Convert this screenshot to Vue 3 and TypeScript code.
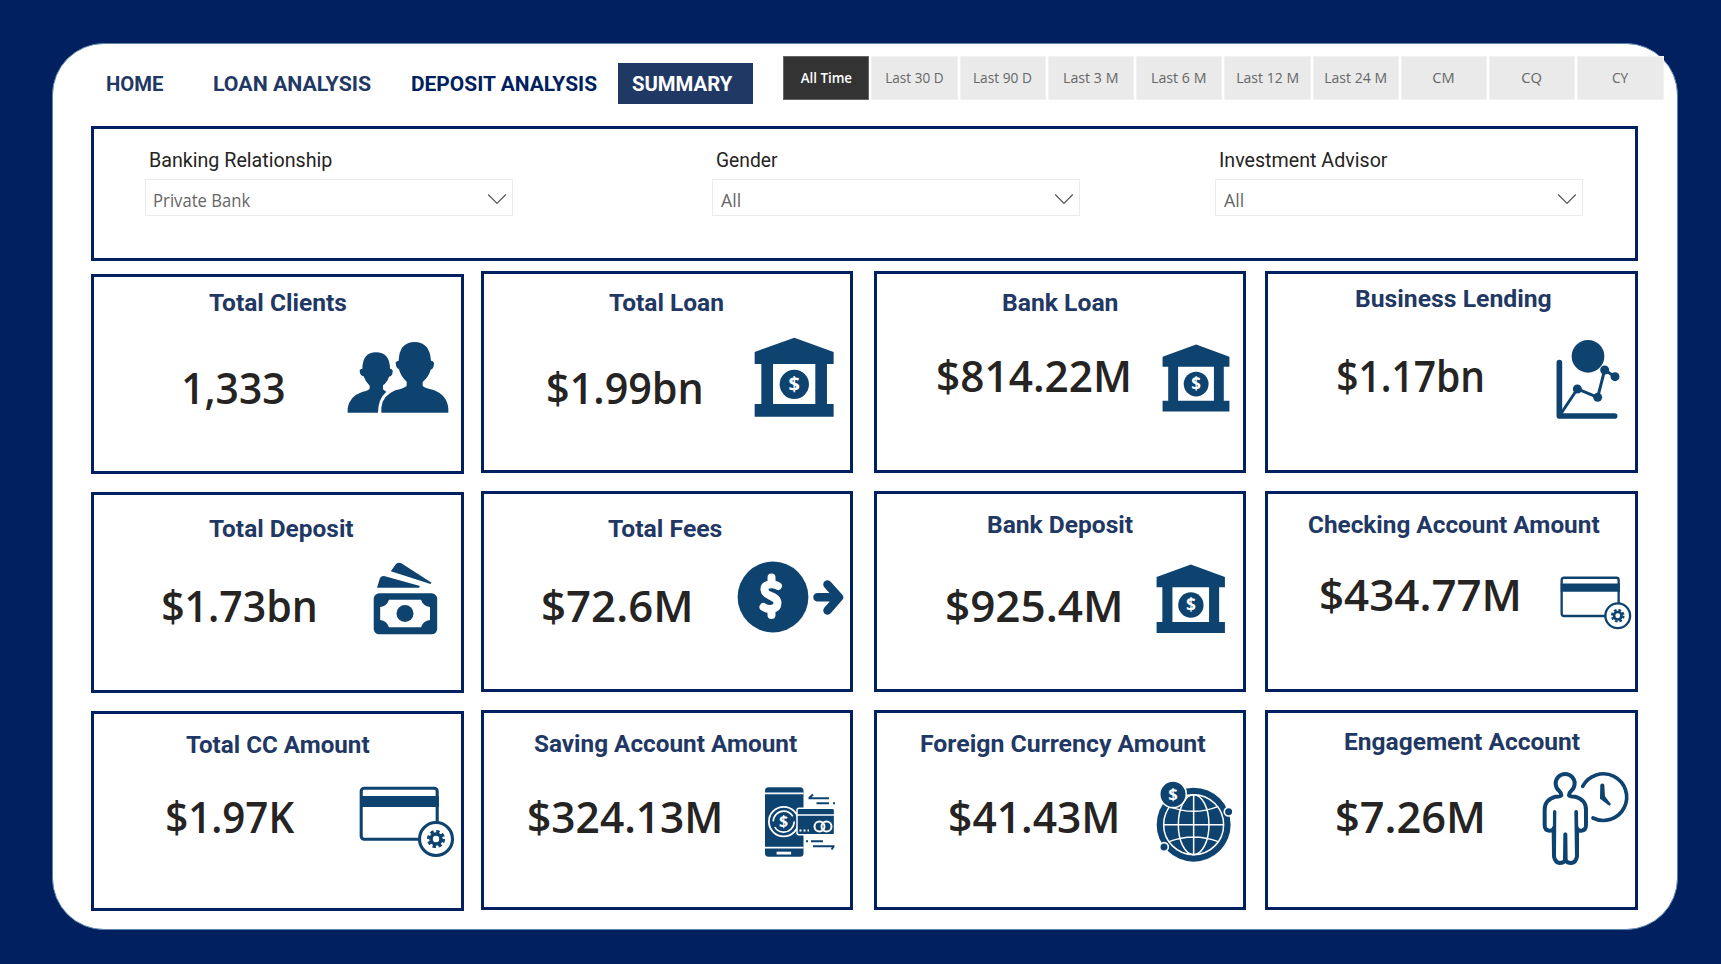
<script setup lang="ts">
import type { Directive } from 'vue'

interface Label {
  text: string
  x: number
  width: number
  base: number
}
interface Icon {
  kind: 'people' | 'bank' | 'chart' | 'cash' | 'fees' | 'card' | 'phone' | 'globe' | 'person'
  x: number
  y: number
  w: number
  h: number
}
interface Kpi {
  title: Label
  value: Label
  icon: Icon
}
interface Column {
  x: number
  rows: number[]
  name: string
  cards: Kpi[]
}

const BORDER = 3
const TITLE_BASELINE = 22
const VALUE_BASELINE = 42

const label = (text: string, x: number, right: number, base: number): Label => ({ text, x, width: right - x, base })
const icon = (kind: Icon['kind'], x: number, y: number, w: number, h: number): Icon => ({ kind, x, y, w, h })

const nav = [
  { text: 'HOME', name: 'home', width: 57 },
  { text: 'LOAN ANALYSIS', name: 'loan', width: 156.5 },
  { text: 'DEPOSIT ANALYSIS', name: 'deposit', width: 185 },
  { text: 'SUMMARY', name: 'summary', width: 100.5 },
]

const periods = [
  { text: 'All Time', width: 51.5 },
  { text: 'Last 30 D', width: 57.5 },
  { text: 'Last 90 D', width: 58 },
  { text: 'Last 3 M', width: 53 },
  { text: 'Last 6 M', width: 53 },
  { text: 'Last 12 M', width: 60.5 },
  { text: 'Last 24 M', width: 60.5 },
  { text: 'CM', width: 21 },
  { text: 'CQ', width: 20 },
  { text: 'CY', width: 16.5 },
]

const filters = [
  { label: 'Banking Relationship', labelWidth: 181.5, value: 'Private Bank', valueWidth: 96.5 },
  { label: 'Gender', labelWidth: 61, value: 'All', valueWidth: 19.5 },
  { label: 'Investment Advisor', labelWidth: 168, value: 'All', valueWidth: 19.5 },
]

const columns: Column[] = [
  {
    x: 91,
    rows: [274, 492, 711],
    name: 'first',
    cards: [
      {
        title: label('Total Clients', 208.5, 346, 311),
        value: label('1,333', 184, 283.5, 404),
        icon: icon('people', 346.7, 341, 102, 72.7),
      },
      {
        title: label('Total Deposit', 209, 353.5, 537),
        value: label('$1.73bn', 163, 315, 622),
        icon: icon('cash', 372.7, 562, 66, 74),
      },
      {
        title: label('Total CC Amount', 185.5, 369, 753),
        value: label('$1.97K', 167, 295, 833),
        icon: icon('card', 358.5, 786, 96, 72),
      },
    ],
  },
  {
    x: 481,
    rows: [271, 491, 710],
    name: 'second',
    cards: [
      {
        title: label('Total Loan', 609, 723.5, 311),
        value: label('$1.99bn', 548, 701, 404),
        icon: icon('bank', 754.3, 337.3, 80.3, 80.3),
      },
      {
        title: label('Total Fees', 607.5, 721.5, 537),
        value: label('$72.6M', 543, 690, 622),
        icon: icon('fees', 737, 561, 108, 72),
      },
      {
        title: label('Saving Account Amount', 533.5, 796.5, 752),
        value: label('$324.13M', 529, 720, 833),
        icon: icon('phone', 765, 787, 72, 72),
      },
    ],
  },
  {
    x: 874,
    rows: [271, 491, 710],
    name: 'third',
    cards: [
      {
        title: label('Bank Loan', 1002.5, 1117.5, 311),
        value: label('$814.22M', 938, 1128.5, 392),
        icon: icon('bank', 1161.5, 343.7, 68, 68),
      },
      {
        title: label('Bank Deposit', 988, 1133, 533),
        value: label('$925.4M', 947, 1120, 622),
        icon: icon('bank', 1156, 563.7, 69.5, 69.5),
      },
      {
        title: label('Foreign Currency Amount', 920.5, 1205, 752),
        value: label('$41.43M', 950, 1117, 833),
        icon: icon('globe', 1156.3, 781.3, 77.3, 81.3),
      },
    ],
  },
  {
    x: 1265,
    rows: [271, 491, 710],
    name: 'fourth',
    cards: [
      {
        title: label('Business Lending', 1355.5, 1550.5, 307),
        value: label('$1.17bn', 1337.5, 1482, 392),
        icon: icon('chart', 1555.7, 339.3, 64.7, 81.3),
      },
      {
        title: label('Checking Account Amount', 1308.5, 1599, 533),
        value: label('$434.77M', 1320.5, 1518, 611),
        icon: icon('card', 1559.5, 576.3, 72, 54),
      },
      {
        title: label('Engagement Account', 1345, 1580, 750),
        value: label('$7.26M', 1337, 1482.5, 833),
        icon: icon('person', 1541.7, 771.3, 87.3, 94.7),
      },
    ],
  },
]

const viewBoxes: Record<Icon['kind'], string> = {
  people: '800 228 306 218',
  bank: '838 217 241 241',
  chart: '902 223 194 244',
  cash: '0 0 66 74',
  fees: '0 0 108 72',
  card: '0 0 96 72',
  phone: '0 0 72 72',
  globe: '874 244 232 244',
  person: '845 214 262 284',
}

const place = (x: number, y: number, col: Column, row: number) => ({
  marginLeft: `${x - col.x - BORDER}px`,
  marginTop: `${y - col.rows[row] - BORDER}px`,
})

// Scales a line of text horizontally so that its drawn glyphs span the given width.
const vFit: Directive<HTMLElement, number> = {
  mounted(el, binding) {
    const ctx = document.createElement('canvas').getContext('2d')
    if (!ctx) return
    const style = getComputedStyle(el)
    ctx.font = `${style.fontWeight} ${style.fontSize} ${style.fontFamily}`
    const m = ctx.measureText((el.textContent ?? '').trim())
    const scale = binding.value / (m.actualBoundingBoxLeft + m.actualBoundingBoxRight)
    el.style.transform = binding.modifiers.center
      ? `scaleX(${scale})`
      : `translateX(${m.actualBoundingBoxLeft * scale}px) scaleX(${scale})`
  },
}
</script>

<template>
  <div class="page">
    <main class="panel">
      <header class="top">
        <nav class="nav">
          <a v-for="n in nav" :key="n.name" class="nav-item" :class="n.name"><span v-fit="n.width" class="fit">{{ n.text }}</span></a>
        </nav>
        <div class="periods">
          <button v-for="(p, i) in periods" :key="p.text" class="period" :class="{ active: i === 0 }">
            <span v-fit.center="p.width" class="fit centered">{{ p.text }}</span>
          </button>
        </div>
      </header>

      <section class="filters">
        <div v-for="f in filters" :key="f.label" class="filter">
          <div class="filter-label"><span v-fit="f.labelWidth" class="fit">{{ f.label }}</span></div>
          <div class="select">
            <span v-fit="f.valueWidth" class="fit">{{ f.value }}</span>
            <svg class="chevron" viewBox="0 0 20 12"><path d="M1.2 1.5 10 10.3 18.8 1.5" /></svg>
          </div>
        </div>
      </section>

      <section class="board">
        <div v-for="col in columns" :key="col.name" class="column" :class="col.name">
          <article v-for="(c, r) in col.cards" :key="c.title.text" class="card">
            <h2 class="title" :style="place(c.title.x, c.title.base - TITLE_BASELINE, col, r)">
              <span v-fit="c.title.width" class="fit">{{ c.title.text }}</span>
            </h2>
            <div class="value" :style="place(c.value.x, c.value.base - VALUE_BASELINE, col, r)">
              <span v-fit="c.value.width" class="fit">{{ c.value.text }}</span>
            </div>
            <svg
              class="icon"
              :style="place(c.icon.x, c.icon.y, col, r)"
              :width="c.icon.w"
              :height="c.icon.h"
              :viewBox="viewBoxes[c.icon.kind]"
            >
              <template v-if="c.icon.kind === 'people'">
                <path d="M802 443V430Q806 395 845 381Q865 376 868 371V362Q855 350 850 334Q838 332 838 316Q840 311 846 311Q847 262 887 262Q928 262 929 311Q938 312 937 320Q936 334 926 335Q922 350 908 361V373Q912 377 918 380Q893 402 893 443Z" />
                <path d="M903 443V428Q906 392 945 376Q975 368 979 362V350Q960 332 956 313Q946 309 946 292Q950 287 955 287Q957 231 1003 231Q1048 231 1052 287Q1061 288 1061 296Q1060 312 1051 314Q1046 334 1027 351V362Q1032 369 1060 375Q1100 390 1104 430V443Z" />
              </template>
              <template v-else-if="c.icon.kind === 'bank'">
                <path fill-rule="evenodd" d="M840 262 959 219 1077 262V298H1057V418H1077V456H840V418H860V298H840ZM895 298V418H1022V298Z" />
                <circle cx="959" cy="359" r="44" />
                <text class="glyph" x="959" y="380" font-size="60">$</text>
              </template>
              <template v-else-if="c.icon.kind === 'chart'">
                <circle cx="998" cy="275" r="49" />
                <path class="line" stroke-width="17" d="M912 294V454H1078" />
                <path class="line" stroke-width="9" d="M916 448 966 373 1027 398 1048 316 1079 336" />
                <circle cx="966" cy="373" r="13.5" />
                <circle cx="1027" cy="398" r="13.5" />
                <circle cx="1048" cy="316" r="13.5" />
                <circle cx="1079" cy="336" r="13.5" />
              </template>
              <template v-else-if="c.icon.kind === 'cash'">
                <path d="M4 25.7 7 16Q9 13 12 14.3L47 24 46 25.7Z" />
                <path d="M17.8 9.3 23 2Q26-.5 29.5 2L58.6 20.7 57.5 22Z" />
                <rect x=".7" y="31.3" width="63.5" height="41" rx="5.5" />
                <path class="white" d="M16 37.7H48Q50 44 57 45V58Q50 59 48 65.3H16Q14 59 7.2 58V45Q14 44 16 37.7Z" />
                <circle cx="32" cy="51.5" r="8.5" />
              </template>
              <template v-else-if="c.icon.kind === 'fees'">
                <circle cx="36" cy="36" r="35.4" />
                <path class="line knock" stroke-width="8" d="M41 25C35 22 27 23 27.5 29C28 36 40.5 34 40.5 42C40.5 49 31 49 26.5 46M34.5 16.500V23M34.5 48V54" />
                <path class="line" stroke-width="8.5" d="M80.5 36.3H100M90.5 23.5 102 36.3 90.5 49.5" />
              </template>
              <template v-else-if="c.icon.kind === 'card'">
                <rect class="outline" x="2.2" y="2.3" width="76" height="51" rx="3" />
                <rect x="1" y="10" width="79" height="11" />
                <circle class="outline" cx="77" cy="53" r="16.5" />
                <circle cx="77" cy="53" r="6.8" />
                <circle class="teeth" cx="77" cy="53" r="7.6" />
                <circle class="white" cx="77" cy="53" r="3.2" />
              </template>
              <template v-else-if="c.icon.kind === 'phone'">
                <rect x="0" y=".3" width="38.5" height="69.5" rx="3.5" />
                <path class="knock thin" d="M0 6.4H38.5M0 60.6H38.5" />
                <rect class="white" x="11.6" y="64.7" width="14.5" height="2.8" />
                <circle class="knock" stroke-width="1.8" cx="18.7" cy="34.6" r="14.8" />
                <circle class="knock" stroke-width="1.6" stroke-dasharray="27 6" cx="18.7" cy="34.6" r="10.5" />
                <text class="glyph" x="18.7" y="40.3" font-size="16">$</text>
                <rect class="edge" x="32" y="21.3" width="37.6" height="26.4" rx="2" />
                <path class="knock thin" d="M32 28H69.6" />
                <path class="knock dots" d="M34.5 43.500H44" />
                <circle class="knock" stroke-width="2" cx="54.5" cy="39.5" r="5" />
                <circle class="knock" stroke-width="2" cx="61.5" cy="39.5" r="5" />
                <path class="dash" d="M43.5 11.200H64M44.2 11 48 7.5M51.5 16.300H64M68 16.300H70M41 54.300H43M46 54.300H58M48 59.200H69.5M68.7 59.5 66.5 62.5" />
              </template>
              <template v-else-if="c.icon.kind === 'globe'">
                <circle cx="987" cy="375" r="111" />
                <g class="knock" stroke-width="4.5">
                  <circle cx="987" cy="375" r="90" />
                  <ellipse cx="987" cy="375" rx="46" ry="90" />
                  <path d="M987 285V465M897 375H1077M913 320Q987 350 1061 320M913 426Q987 398 1061 426" />
                </g>
                <circle class="badge" cx="925" cy="284" r="40" />
                <text class="glyph" x="925" y="301" font-size="50">$</text>
                <circle class="badge" cx="1092" cy="336" r="13" />
                <circle class="badge" cx="898" cy="442" r="13" />
              </template>
              <template v-else>
                <path class="line" stroke-width="12" d="M903 287Q903 279 896 273A28.5 28.5 0 1 1 933 273Q926 279 926 287Q928 291 944 291Q977 300 977 330V377Q977 392 963 393Q952 393 950 386M903 287Q901 291 886 291Q853 300 853 330V377Q853 392 867 393Q878 393 880 386M880 386 881 470Q884 488 898 490Q911 490 915 481Q919 490 933 490Q947 488 950 470L950 386" />
                <path d="M878 335Q883 327 888 335L887 470H877ZM942 335Q947 327 953 335L955 470H944ZM909 402Q915 393 921 402L922 484H908Z" />
                <path class="line" stroke-width="11" d="M967 260A70 70 0 1 1 998 355" />
                <path d="M1020 255Q1026 248 1032 255L1034 290 1051 312Q1052 320 1045 317L1019 297Z" />
              </template>
            </svg>
          </article>
        </div>
      </section>
    </main>
  </div>
</template>

<style>
body {
  margin: 0;
  background: #00205f;
}
</style>

<style scoped>
.page {
  box-sizing: border-box;
  width: 1721px;
  height: 964px;
  padding: 43px 0 0 52px;
  overflow: hidden;
  background: #00205f;
}
.panel {
  box-sizing: border-box;
  width: 1626px;
  height: 887px;
  border: 1px solid #5d86ad;
  border-radius: 52px;
  background: #fff;
}
.fit {
  display: inline-block;
  white-space: nowrap;
  transform-origin: left center;
}
.fit.centered {
  transform-origin: center;
}

.top {
  display: flex;
  height: 82px;
}
.nav {
  display: flex;
  flex: none;
  width: 730px;
  padding-top: 19px;
  font: 700 20.5px/41px Roboto, sans-serif;
  color: #1f3864;
}
.nav-item {
  display: block;
  flex: none;
  box-sizing: border-box;
  height: 41px;
  padding-top: 1px;
}
.home {
  width: 107px;
  margin-left: 53.5px;
}
.loan {
  width: 198px;
}
.deposit {
  width: 206.5px;
  color: #002060;
}
.summary {
  width: 135px;
  padding-left: 13.5px;
  background: #1f3864;
  color: #fff;
}
.periods {
  display: flex;
  gap: 2px;
  flex: none;
  width: 880.5px;
  height: 44px;
  padding-top: 12px;
}
.period {
  flex: 1 1 0;
  min-width: 0;
  height: 44px;
  padding: 0;
  border: 1px solid #f1f1f1;
  background: #eaeaea;
  color: #666;
  font: 400 13.7px/40px 'Open Sans', sans-serif;
  text-align: center;
}
.period.active {
  border-color: #666;
  background: #333;
  color: #fff;
  font-weight: 600;
}

.filters {
  display: flex;
  box-sizing: border-box;
  width: 1547px;
  height: 135px;
  margin-left: 38px;
  padding-left: 51px;
  border: 3px solid #002060;
}
.filter {
  width: 368px;
  margin-right: 199px;
  padding-top: 22px;
}
.filter:nth-child(2) {
  margin-right: 134.5px;
}
.filter:last-child {
  margin-right: 0;
}
.filter-label {
  height: 28px;
  padding-left: 5px;
  font: 400 19.3px/19px Roboto, sans-serif;
  color: #252423;
}
.select {
  display: flex;
  box-sizing: border-box;
  align-items: center;
  justify-content: space-between;
  height: 37px;
  padding: 4px 5px 0 8px;
  border: 1px solid #ebebeb;
  font: 400 18.5px/30px 'Open Sans', sans-serif;
  color: #666;
}
.chevron {
  width: 20px;
  height: 12px;
  margin-top: -2px;
  fill: none;
  stroke: #555;
  stroke-width: 1.2;
}

.board {
  display: flex;
  margin: 10px 0 0 38px;
}
.column {
  display: grid;
  grid-template-rows: 202px 201px 200px;
  row-gap: 18px;
  width: 372px;
}
.first {
  grid-template-rows: 200px 201px 200px;
  width: 373px;
  margin: 3px 17px 0 0;
}
.second {
  margin-right: 21px;
}
.third {
  margin-right: 19px;
}
.fourth {
  width: 373px;
}
.card {
  display: grid;
  align-items: start;
  justify-items: start;
  border: 3px solid #002060;
}
.title,
.value,
.icon {
  grid-area: 1 / 1;
}
.title {
  margin: 0;
  font: 700 24px/28px Roboto, sans-serif;
  color: #1f3864;
}
.value {
  font: 600 44px/50px 'Open Sans', sans-serif;
  color: #252423;
}

.icon {
  display: block;
  overflow: visible;
  fill: #0e4370;
}
.line {
  fill: none;
  stroke: #0e4370;
  stroke-linecap: round;
  stroke-linejoin: round;
}
.knock {
  fill: none;
  stroke: #fff;
}
.thin {
  stroke-width: 1.6;
}
.dots {
  stroke-width: 2;
  stroke-dasharray: 2 2;
}
.dash {
  fill: none;
  stroke: #0e4370;
  stroke-width: 2;
}
.white {
  fill: #fff;
}
.outline {
  fill: #fff;
  stroke: #0e4370;
  stroke-width: 3.1;
}
.teeth {
  fill: none;
  stroke: #0e4370;
  stroke-width: 3;
  stroke-dasharray: 3.4 2.57;
}
.edge {
  stroke: #fff;
  stroke-width: 1.5;
}
.badge {
  stroke: #fff;
  stroke-width: 5;
}
.glyph {
  fill: #fff;
  font-family: 'Open Sans', sans-serif;
  font-weight: 700;
  text-anchor: middle;
}
</style>
